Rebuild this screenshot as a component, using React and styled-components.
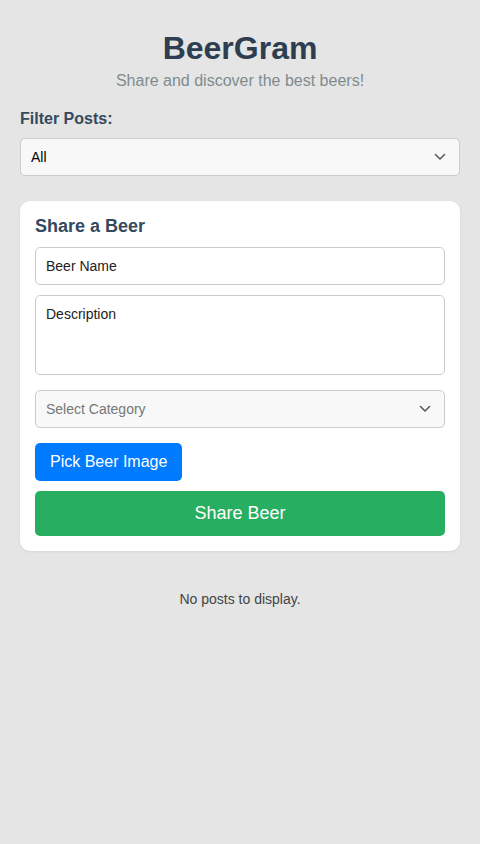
import React from "react";
import styled, { createGlobalStyle } from "styled-components";

const Global = createGlobalStyle`
  html, body { margin: 0; padding: 0; background: #e5e5e5; }
  body { font-family: "Liberation Sans", Arial, sans-serif; }
  * { box-sizing: border-box; }
`;

const Page = styled.div`
  min-height: 844px;
  background: #e5e5e5;
  padding: 30px 20px 20px;
  display: flex;
  flex-direction: column;
`;

const Header = styled.header`
  display: flex;
  flex-direction: column;
  align-items: center;
  gap: 4px;
  margin-bottom: 20px;
`;

const Title = styled.h1`
  margin: 0;
  font-size: 32px;
  line-height: 37px;
  font-weight: 700;
  color: #2c3e50;
`;

const Subtitle = styled.p`
  margin: 0;
  font-size: 16px;
  line-height: 19px;
  color: #7f8c8d;
`;

const Label = styled.label`
  font-size: 16px;
  line-height: 18px;
  font-weight: 700;
  color: #34495e;
  margin-bottom: 10px;
`;

const SelectWrap = styled.div`
  position: relative;
  margin-bottom: ${(p) => p.$mb || 0}px;
`;

const Select = styled.select`
  appearance: none;
  -webkit-appearance: none;
  width: 100%;
  height: 38px;
  padding: 0 30px 0 10px;
  border: 1px solid #ccc;
  border-radius: 5px;
  background: #f8f8f8;
  font-family: "Liberation Sans", Arial, sans-serif;
  font-size: 14px;
  color: ${(p) => (p.$placeholder ? "#777" : "#000")};
  outline: none;
`;

const Chevron = styled.svg`
  position: absolute;
  right: 14px;
  top: 50%;
  width: 12px;
  height: 8px;
  transform: translateY(-50%);
  pointer-events: none;
`;

const Card = styled.section`
  margin-top: 25px;
  background: #fff;
  border-radius: 10px;
  padding: 15px;
  display: flex;
  flex-direction: column;
  box-shadow: 0 1px 3px rgba(0, 0, 0, 0.06);
`;

const CardTitle = styled.h2`
  margin: 0 0 10px;
  font-size: 18px;
  line-height: 21px;
  font-weight: 700;
  color: #34495e;
`;

const Input = styled.input`
  width: 100%;
  height: 38px;
  padding: 0 10px;
  border: 1px solid #ccc;
  border-radius: 5px;
  background: #fff;
  font-family: "Liberation Sans", Arial, sans-serif;
  font-size: 14px;
  color: #000;
  margin-bottom: 10px;
  outline: none;
  &::placeholder { color: #222; }
`;

const TextArea = styled.textarea`
  width: 100%;
  height: 80px;
  padding: 10px;
  border: 1px solid #ccc;
  border-radius: 5px;
  background: #fff;
  font-family: "Liberation Sans", Arial, sans-serif;
  font-size: 14px;
  line-height: 17px;
  resize: none;
  margin-bottom: 15px;
  outline: none;
  &::placeholder { color: #222; }
`;

const PickButton = styled.button`
  align-self: flex-start;
  height: 38px;
  padding: 0 15px;
  border: none;
  border-radius: 5px;
  background: #007bff;
  color: #fff;
  font-family: "Liberation Sans", Arial, sans-serif;
  font-size: 16px;
  margin-bottom: 10px;
  cursor: pointer;
`;

const ShareButton = styled.button`
  width: 100%;
  height: 45px;
  border: none;
  border-radius: 5px;
  background: #27ae60;
  color: #fff;
  font-family: "Liberation Sans", Arial, sans-serif;
  font-size: 18px;
  cursor: pointer;
`;

const Empty = styled.p`
  margin: 40px 0 0;
  text-align: center;
  font-size: 14px;
  line-height: 16px;
  color: #444;
`;

const ChevronIcon = () => (
  <Chevron viewBox="0 0 12 8">
    <path d="M1.5 1.5 L6 6 L10.5 1.5" fill="none" stroke="#555" strokeWidth="1.5" strokeLinecap="round" strokeLinejoin="round" />
  </Chevron>
);

export default function App() {
  return (
    <>
      <Global />
      <Page>
        <Header>
          <Title>BeerGram</Title>
          <Subtitle>Share and discover the best beers!</Subtitle>
        </Header>
        <Label htmlFor="filter">Filter Posts:</Label>
        <SelectWrap>
          <Select id="filter" defaultValue="all">
            <option value="all">All</option>
          </Select>
          <ChevronIcon />
        </SelectWrap>
        <Card>
          <CardTitle>Share a Beer</CardTitle>
          <Input placeholder="Beer Name" />
          <TextArea placeholder="Description" />
          <SelectWrap $mb={15}>
            <Select $placeholder defaultValue="">
              <option value="">Select Category</option>
            </Select>
            <ChevronIcon />
          </SelectWrap>
          <PickButton>Pick Beer Image</PickButton>
          <ShareButton>Share Beer</ShareButton>
        </Card>
        <Empty>No posts to display.</Empty>
      </Page>
    </>
  );
}
